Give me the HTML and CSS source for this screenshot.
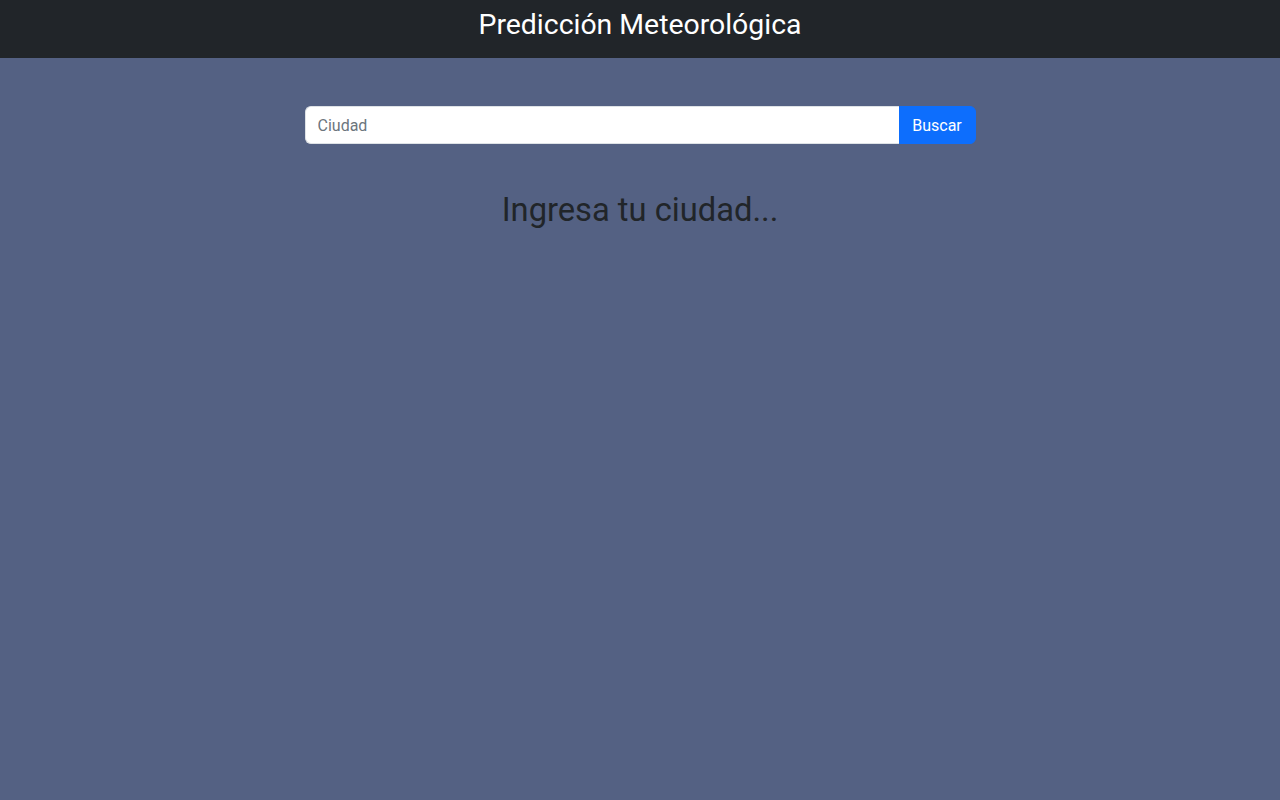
FILE: index.html
```html
<!DOCTYPE html>
<html lang="es">
<head>
<meta charset="utf-8">
<title>Predicción Meteorológica</title>
<link rel="stylesheet" href="styles.css">
</head>
<body>
<nav class="navbar">
  <span class="brand">Predicción Meteorológica</span>
</nav>
<main class="main">
  <form class="search" onsubmit="return false">
    <input class="search-input" type="text" placeholder="Ciudad">
    <button class="search-btn" type="submit">Buscar</button>
  </form>
  <h2 class="message">Ingresa tu ciudad...</h2>
</main>
</body>
</html>
```
FILE: styles.css
```css
* { box-sizing: border-box; }
html, body { margin: 0; height: 100%; }
body {
  font-family: Roboto, "Noto Sans", "Liberation Sans", sans-serif;
  background: #546183;
  color: #212529;
}
.navbar {
  height: 58px;
  background: #212529;
  display: flex;
  align-items: center;
  justify-content: center;
}
.brand {
  color: #fff;
  font-size: 28.4px;
  line-height: 1.2;
  padding-bottom: 10px;
  padding-top: 2px;
}
.main {
  display: flex;
  flex-direction: column;
  align-items: center;
  padding-top: 48px;
}
.search {
  display: flex;
  width: 671px;
  height: 38px;
}
.search-input {
  flex: 1;
  min-width: 0;
  border: 1px solid #dee2e6;
  border-right: none;
  border-radius: 6px 0 0 6px;
  padding: 6px 12px;
  font: inherit;
  font-size: 16px;
  color: #212529;
  background: #fff;
  outline: none;
}
.search-input::placeholder { color: #6c757d; }
.search-btn {
  border: 1px solid #0d6efd;
  background: #0d6efd;
  color: #fff;
  font: inherit;
  font-size: 16px;
  padding: 6px 12px;
  border-radius: 0 6px 6px 0;
  width: 77px;
}
.message {
  margin: 47px 0 0;
  font-size: 32.7px;
  font-weight: 400;
  line-height: 1.2;
  color: #212529;
}
```
